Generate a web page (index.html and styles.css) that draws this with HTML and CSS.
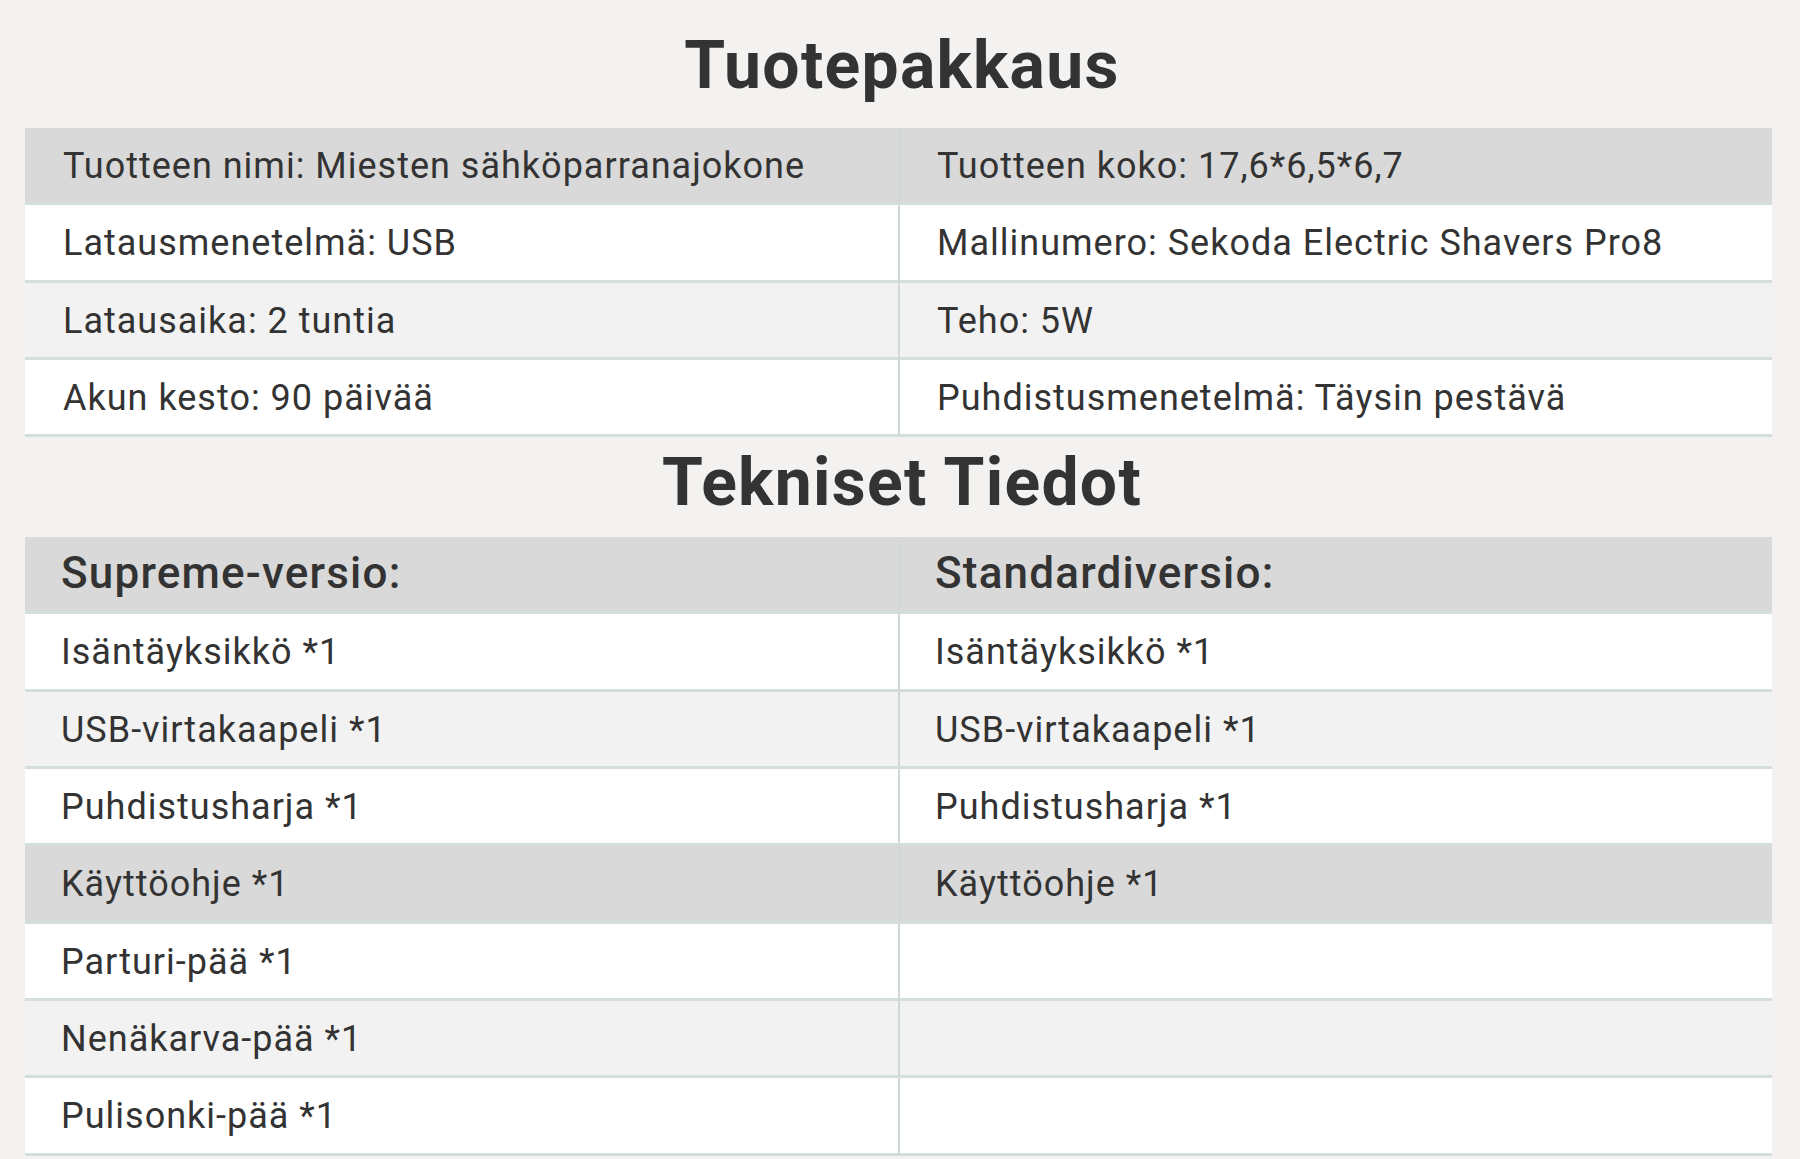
FILE: index.html
```html
<!DOCTYPE html>
<html lang="fi">
<head>
<meta charset="utf-8">
<title>Tuotepakkaus</title>
<link rel="stylesheet" href="styles.css">
</head>
<body>
<main class="page">
  <h1 class="title title-first">Tuotepakkaus</h1>
  <div class="table">
    <div class="cell left bg-dark">Tuotteen nimi: Miesten sähköparranajokone</div>
    <div class="cell right bg-dark">Tuotteen koko: 17,6*6,5*6,7</div>
    <div class="cell left bg-white">Latausmenetelmä: USB</div>
    <div class="cell right bg-white">Mallinumero: Sekoda Electric Shavers Pro8</div>
    <div class="cell left bg-light">Latausaika: 2 tuntia</div>
    <div class="cell right bg-light">Teho: 5W</div>
    <div class="cell left bg-white">Akun kesto: 90 päivää</div>
    <div class="cell right bg-white">Puhdistusmenetelmä: Täysin pestävä</div>
  </div>
  <h1 class="title title-second">Tekniset Tiedot</h1>
  <div class="table table-spec">
    <div class="cell left bg-dark head">Supreme-versio:</div>
    <div class="cell right bg-dark head">Standardiversio:</div>
    <div class="cell left bg-white">Isäntäyksikkö *1</div>
    <div class="cell right bg-white">Isäntäyksikkö *1</div>
    <div class="cell left bg-light">USB-virtakaapeli *1</div>
    <div class="cell right bg-light">USB-virtakaapeli *1</div>
    <div class="cell left bg-white">Puhdistusharja *1</div>
    <div class="cell right bg-white">Puhdistusharja *1</div>
    <div class="cell left bg-dark">Käyttöohje *1</div>
    <div class="cell right bg-dark">Käyttöohje *1</div>
    <div class="cell left bg-white">Parturi-pää *1</div>
    <div class="cell right bg-white"></div>
    <div class="cell left bg-light">Nenäkarva-pää *1</div>
    <div class="cell right bg-light"></div>
    <div class="cell left bg-white">Pulisonki-pää *1</div>
    <div class="cell right bg-white"></div>
  </div>
</main>
</body>
</html>
```
FILE: styles.css
```css
html, body {
  margin: 0;
  padding: 0;
  background: #f3f2f0;
}

body {
  width: 1800px;
  height: 1159px;
  overflow: hidden;
  font-family: Roboto, "Noto Sans", sans-serif;
  color: #333333;
}

.page {
  padding-left: 25px;
  width: 1747px;
}

.title {
  margin: 0;
  padding-left: 7px;
  font-size: 66px;
  font-weight: 700;
  text-align: center;
  color: #333333;
  letter-spacing: 1.3px;
}

.title-first {
  padding-top: 4px;
  height: 124px;
  line-height: 124px;
}

.title-second {
  padding-top: 4px;
  height: 83px;
  line-height: 83px;
  margin-bottom: 13px;
}

.table {
  display: grid;
  grid-template-columns: 875px 872px;
}

.cell {
  box-sizing: border-box;
  height: 77.3px;
  padding: 3px 0 0 38px;
  line-height: 70px;
  font-size: 36px;
  letter-spacing: 1px;
  border-bottom: 3px solid #d4dedb;
  white-space: nowrap;
}

.left {
  border-right: 2px solid #cfdad7;
}

.right {
  padding-left: 37px;
}

.table-spec .left {
  padding-left: 36px;
}

.table-spec .right {
  padding-left: 35px;
}

.head {
  padding-top: 1px;
  font-size: 44px;
  font-weight: 500;
  letter-spacing: 1.2px;
}

.bg-dark {
  background: #d9d9d9;
}

.bg-white {
  background: #ffffff;
}

.bg-light {
  background: #f2f2f2;
}
```
